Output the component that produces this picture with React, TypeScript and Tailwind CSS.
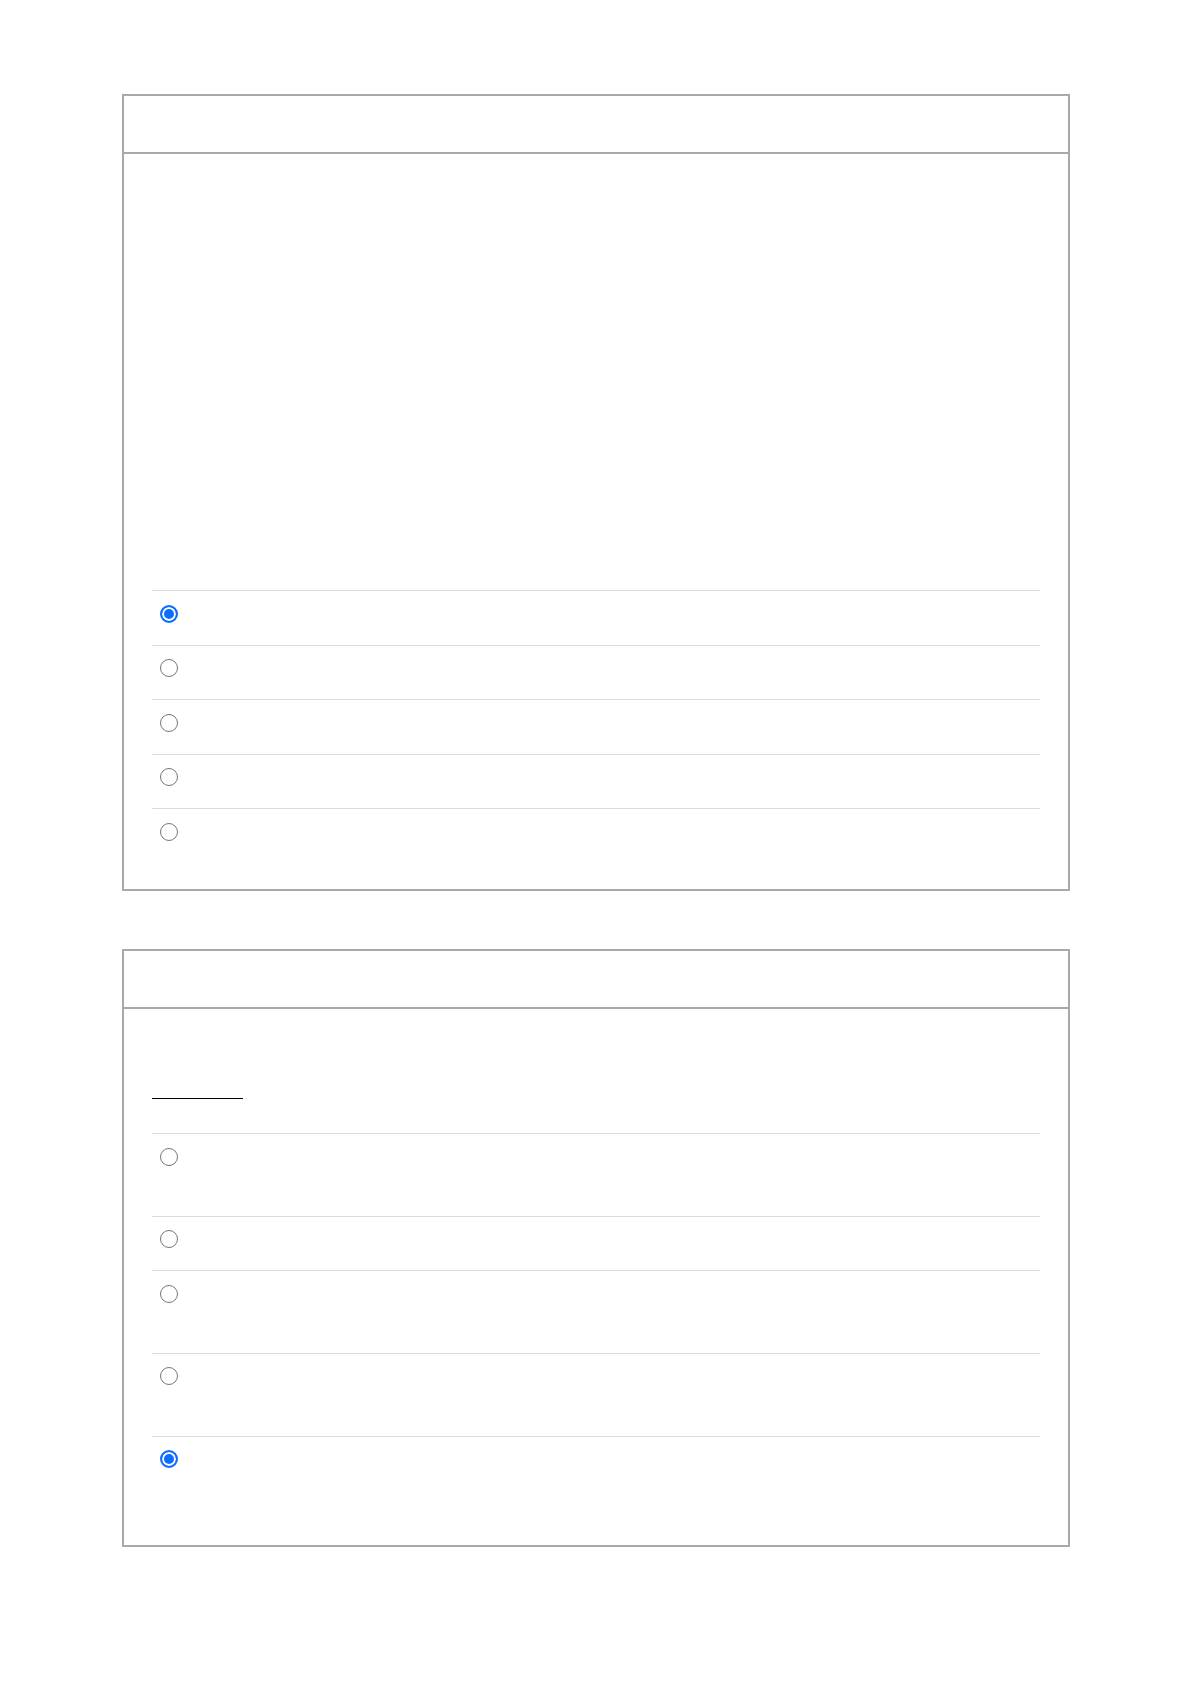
import React from 'react';

type Row = { lines: number; checked?: boolean };

const firstRows: Row[] = [
  { lines: 1, checked: true },
  { lines: 1 },
  { lines: 1 },
  { lines: 1 },
  { lines: 1 },
];

const secondRows: Row[] = [
  { lines: 2 },
  { lines: 1 },
  { lines: 2 },
  { lines: 2 },
  { lines: 2, checked: true },
];

function OptionRow({ row, name, index }: { row: Row; name: string; index: number }) {
  return (
    <label
      className={`flex items-start border-t border-[#dcdcdc] ${row.lines === 2 ? 'h-[82.6px]' : 'h-[54.6px]'}`}
    >
      <input
        type="radio"
        name={name}
        value={index}
        defaultChecked={row.checked}
        className="m-0 ml-[8px] mt-[13.5px] h-[18px] w-[18px] shrink-0 appearance-none rounded-full border-[1.5px] border-[#767676] bg-white checked:border-2 checked:border-[#0b6efd] checked:bg-[#0b6efd] checked:shadow-[inset_0_0_0_2px_#fff]"
      />
      <span className="ml-3 flex-1 text-[16px] leading-[28px]" />
    </label>
  );
}

function Card({ children }: { children: React.ReactNode }) {
  return (
    <div className="ml-[122px] w-[948px] border-2 border-[#a9a9a9] bg-white">
      <div className="h-[57.5px] border-b-2 border-[#a9a9a9]" />
      <div className="px-[28px] pb-[26.5px]">{children}</div>
    </div>
  );
}

export default function App() {
  return (
    <div className="min-h-[1684px] bg-white pt-[94px] font-['Liberation_Sans',sans-serif]">
      <Card>
        <div className="h-[436.5px]" />
        {firstRows.map((r, i) => (
          <OptionRow key={i} row={r} name="q1" index={i} />
        ))}
      </Card>

      <div className="h-[58px]" />

      <Card>
        <div className="h-[89.5px]" />
        <div className="w-[91px] border-b border-black" />
        <div className="h-[33.7px]" />
        {secondRows.map((r, i) => (
          <OptionRow key={i} row={r} name="q2" index={i} />
        ))}
      </Card>
    </div>
  );
}
